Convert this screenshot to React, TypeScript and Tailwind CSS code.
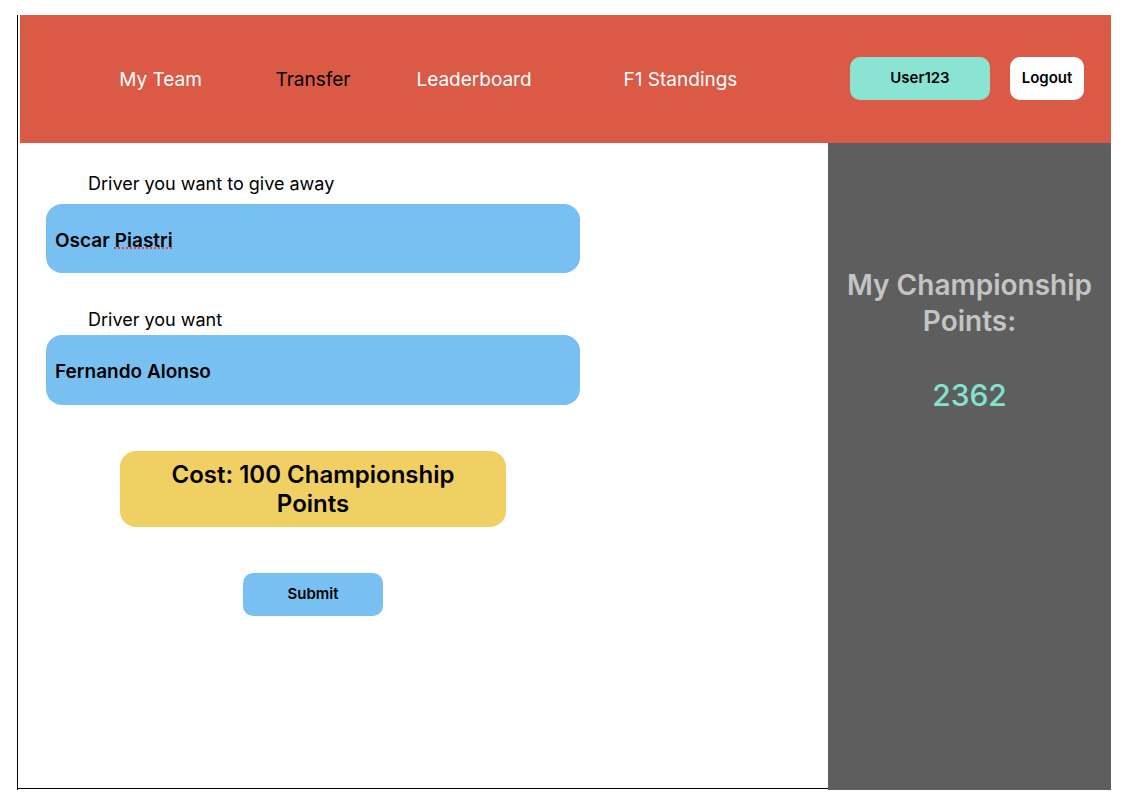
import React from "react";

export default function App() {
  const font = { fontFamily: "Inter, 'Noto Sans', sans-serif" };
  return (
    <div className="w-[1142px] h-[810px] bg-white" style={font}>
      <div className="pt-[15px] pl-[17px]">
        <div className="w-[1094px] border-l border-black flex flex-col">
          <header className="ml-[2px] w-[1091px] h-[128px] bg-[#DB5A46] flex items-center pl-[80px]">
            <div className="w-[121px] text-center text-white text-[19px] mt-[2px]">My Team</div>
            <div className="w-[184px] text-center text-black text-[19px] mt-[2px]">Transfer</div>
            <div className="w-[138px] text-center text-white text-[19px] mt-[2px]">Leaderboard</div>
            <div className="w-[275px] text-center text-white text-[19px] mt-[2px]">F1 Standings</div>
            <div className="ml-[32px] mb-[1px] w-[140px] h-[43px] rounded-[10px] bg-[#8BE3D3] flex items-center justify-center text-[15px] font-semibold text-black">User123</div>
            <div className="ml-[20px] mb-[1px] w-[74px] h-[43px] rounded-[10px] bg-white flex items-center justify-center text-[15px] font-semibold text-black">Logout</div>
          </header>
          <div className="flex">
            <div className="w-[810px] h-[646px] border-b border-black flex flex-col">
              <div className="pl-[70px] pt-[30px] text-[18px] text-black leading-[22px]">Driver you want to give away</div>
              <div className="ml-[28px] mt-[9px] w-[534px] h-[69px] rounded-[16px] bg-[#79C0F2] flex items-center pl-[9px] pt-[5px] text-[19px] font-semibold text-black">
                Oscar <span className="ml-[5px] underline decoration-dotted decoration-[#e04040]">Piastri</span>
              </div>
              <div className="pl-[70px] mt-[36px] text-[18px] text-black leading-[22px]">Driver you want</div>
              <div className="ml-[28px] mt-[4px] w-[534px] h-[70px] rounded-[16px] bg-[#79C0F2] flex items-center pl-[9px] pt-[4px] text-[19px] font-semibold text-black">
                Fernando Alonso
              </div>
              <div className="ml-[102px] mt-[46px] w-[386px] h-[76px] rounded-[16px] bg-[#F0D062] flex items-center justify-center text-center text-[24px] leading-[29px] font-semibold text-black px-[40px]">
                Cost: 100 Championship Points
              </div>
              <div className="ml-[225px] mt-[46px] w-[140px] h-[43px] rounded-[10px] bg-[#79C0F2] flex items-center justify-center text-[15px] font-semibold text-black">
                Submit
              </div>
            </div>
            <div className="w-[283px] h-[647px] bg-[#5E5E5E] flex flex-col items-center">
              <div className="mt-[124px] text-center text-[28px] leading-[36px] font-semibold text-[#C4C4C4]">
                My Championship<br />Points:
              </div>
              <div className="mt-[38px] text-[30px] leading-[36px] font-medium text-[#83E3CF]">2362</div>
            </div>
          </div>
        </div>
      </div>
    </div>
  );
}
